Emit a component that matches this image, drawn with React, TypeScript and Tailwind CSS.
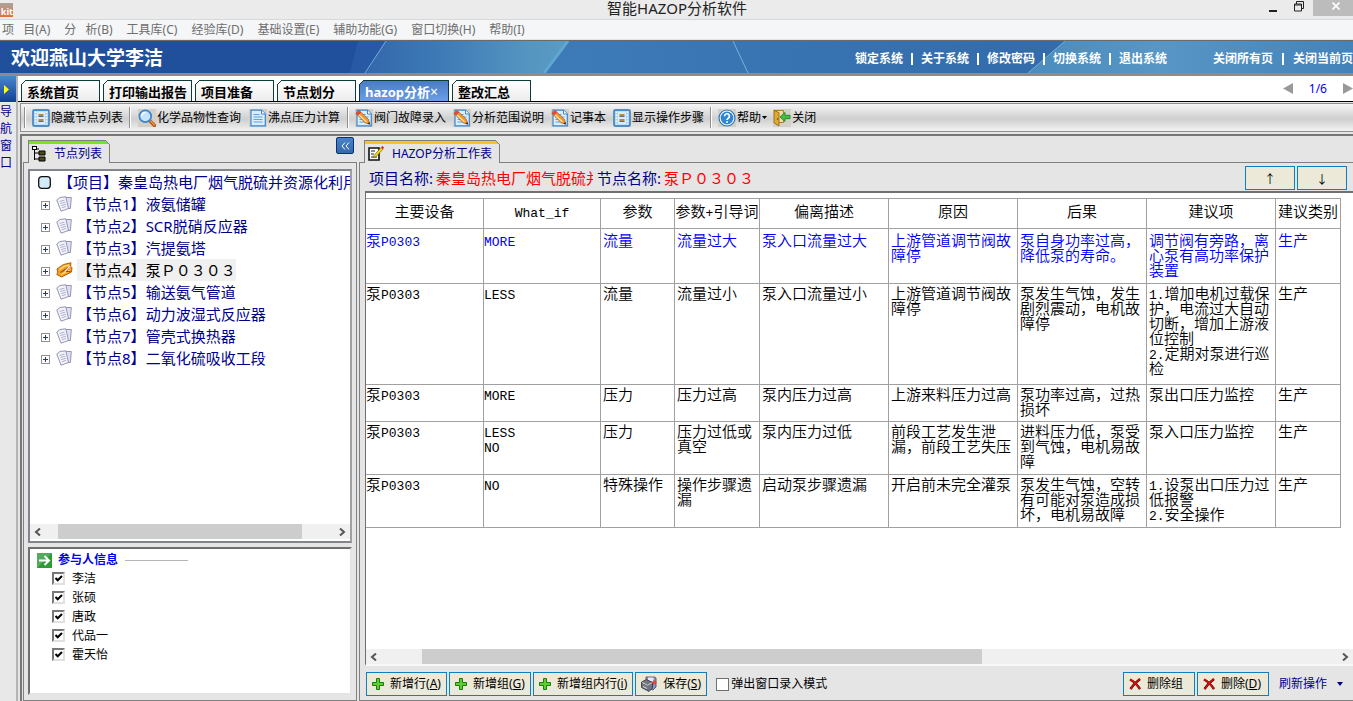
import type { ReactNode } from "react";

const SANS = "font-['Noto_Sans','Noto_Sans_CJK_SC',sans-serif]";

const MENU = [
  "项   目(A)",
  "分   析(B)",
  "工具库(C)",
  "经验库(D)",
  "基础设置(E)",
  "辅助功能(G)",
  "窗口切换(H)",
  "帮助(I)",
];

const SYSTEM_LINKS = ["锁定系统", "关于系统", "修改密码", "切换系统", "退出系统"];

const TABS = [
  { label: "系统首页", width: "w-[79px]" },
  { label: "打印输出报告", width: "w-[89px]" },
  { label: "项目准备", width: "w-[79px]" },
  { label: "节点划分", width: "w-[79px]" },
  { label: "hazop分析", width: "w-[90px]", active: true },
  { label: "整改汇总", width: "w-[79px]" },
];

const NODES = [
  "液氨储罐",
  "SCR脱硝反应器",
  "汽提氨塔",
  "泵Ｐ０３０３",
  "输送氨气管道",
  "动力波湿式反应器",
  "管壳式换热器",
  "二氧化硫吸收工段",
];

const PEOPLE = ["李洁", "张硕", "唐政", "代品一", "霍天怡"];

const COLUMNS = [
  { label: "主要设备", width: "w-[118px]" },
  { label: "What_if", width: "w-[117px]" },
  { label: "参数", width: "w-[74px]" },
  { label: "参数+引导词", width: "w-[85px]" },
  { label: "偏离描述", width: "w-[129px]" },
  { label: "原因", width: "w-[129px]" },
  { label: "后果", width: "w-[129px]" },
  { label: "建议项", width: "w-[129px]" },
  { label: "建议类别", width: "w-[65px]" },
];

const ROWS = [
  {
    height: "h-[55px]",
    cells: ["泵P0303", "MORE", "流量", "流量过大", "泵入口流量过大", "上游管道调节阀故\n障停", "泵自身功率过高，\n降低泵的寿命。", "调节阀有旁路，离\n心泵有高功率保护\n装置", "生产"],
  },
  {
    height: "h-[101px]",
    cells: ["泵P0303", "LESS", "流量", "流量过小", "泵入口流量过小", "上游管道调节阀故\n障停", "泵发生气蚀，发生\n剧烈震动，电机故\n障停", "1.增加电机过载保\n护，电流过大自动\n切断，增加上游液\n位控制\n2.定期对泵进行巡\n检", "生产"],
  },
  {
    height: "h-[37px]",
    cells: ["泵P0303", "MORE", "压力", "压力过高", "泵内压力过高", "上游来料压力过高", "泵功率过高，过热\n损坏", "泵出口压力监控", "生产"],
  },
  {
    height: "h-[53px]",
    cells: ["泵P0303", "LESS\nNO", "压力", "压力过低或\n真空", "泵内压力过低", "前段工艺发生泄\n漏，前段工艺失压", "进料压力低，泵受\n到气蚀，电机易故\n障", "泵入口压力监控", "生产"],
  },
  {
    height: "h-[53px]",
    cells: ["泵P0303", "NO", "特殊操作", "操作步骤遗\n漏", "启动泵步骤遗漏", "开启前未完全灌泵", "泵发生气蚀，空转\n有可能对泵造成损\n坏，电机易故障", "1.设泵出口压力过\n低报警\n2.安全操作", "生产"],
  },
];

// Latin runs are set in a monospaced face, a little smaller than the Chinese text
function GridText({ text }: { text: string }) {
  return (
    <>
      {text.split(/([\x21-\x7e]+)/).map((part, i) =>
        i % 2 ? (
          <span key={i} className="font-['Liberation_Mono',monospace] text-[13px] leading-[0px]">
            {part}
          </span>
        ) : (
          part
        )
      )}
    </>
  );
}

function FilmIcon() {
  return (
    <svg className="size-[18px] shrink-0" viewBox="0 0 18 18">
      <rect width="18" height="18" fill="#d3d0c8" />
      <rect x="1" y="1" width="16" height="16" rx="1.5" fill="#a9d3f5" stroke="#2e78bd" strokeWidth="1.4" />
      <path d="M3.5 2.5v13M14.5 2.5v13" stroke="#fff" strokeWidth="1.6" strokeDasharray="1.6 1.4" />
      <rect x="5" y="2.5" width="8" height="13" fill="#d9ecfb" />
      <path d="M6.5 6h5M6.5 11h5" stroke="#b58a45" strokeWidth="2" />
      <path d="M6.5 7.5h5M6.5 12.5h5" stroke="#5a6d80" />
    </svg>
  );
}

function SearchIcon() {
  return (
    <svg className="size-[18px] shrink-0" viewBox="0 0 18 18">
      <rect width="18" height="18" fill="#d3d0c8" />
      <path d="M11.5 11.5l5 5" stroke="#b4551b" strokeWidth="3.2" strokeLinecap="round" />
      <path d="M12 11.6l4.4 4.4" stroke="#f29a45" strokeWidth="1.2" strokeLinecap="round" />
      <circle cx="7.3" cy="7.3" r="5.9" fill="#c3e4fb" stroke="#3d83c9" strokeWidth="1.7" />
      <path d="M3.6 7.2a3.8 3.8 0 0 1 3.8-3.7" stroke="#fff" strokeWidth="1.5" fill="none" />
    </svg>
  );
}

function PageIcon({ pencil = false }: { pencil?: boolean }) {
  return (
    <svg className="size-[18px] shrink-0" viewBox="0 0 18 18">
      <rect width="18" height="18" fill="#d3d0c8" />
      <path d="M2 1.2h10.5L16.3 5v11.8H2z" fill="#d9edfc" stroke="#3d86cb" strokeWidth="1.2" />
      <path d="M12.5 1.2V5h3.8" fill="#fff" stroke="#3d86cb" />
      <path d="M4.5 5.5h6M4.5 8h9M4.5 10.5h9M4.5 13h9" stroke="#5ea2de" strokeWidth="1.1" />
      {pencil ? (
        <>
          <path d="M.8 4.2l3.4-2.6 9.3 9 1.3 4.7-4.7-1.6z" fill="#f39a2b" stroke="#a8501a" strokeWidth=".7" />
          <path d="M.8 4.2l3.4-2.6 2 2L3 6.4z" fill="#e2493a" />
          <path d="M4 6l7.5 7" stroke="#ffe3a8" strokeWidth="1.2" />
          <path d="M12.6 14.5l2.4.9-.7-2.5z" fill="#222" />
        </>
      ) : null}
    </svg>
  );
}

function HelpIcon() {
  return (
    <svg className="size-[18px] shrink-0" viewBox="0 0 18 18">
      <rect width="18" height="18" fill="#d3d0c8" />
      <circle cx="9" cy="9" r="8" fill="#fff" stroke="#2e72b8" strokeWidth="1.2" />
      <circle cx="9" cy="9" r="6.4" fill="#2f86d8" />
      <path d="M6.6 7.2a2.4 2.4 0 1 1 3.7 2c-.9.6-1.3.9-1.3 1.7" fill="none" stroke="#fff" strokeWidth="1.7" />
      <circle cx="9" cy="12.9" r="1" fill="#fff" />
    </svg>
  );
}

function DoorIcon() {
  return (
    <svg className="size-[18px] shrink-0" viewBox="0 0 18 18">
      <rect width="18" height="18" fill="#d3d0c8" />
      <path d="M1 1.5h9.5v12H6" fill="#e9dcae" stroke="#a8802a" />
      <path d="M1 1.5l5 2V17l-5-3z" fill="#e3a92e" stroke="#8a6316" strokeWidth=".8" />
      <circle cx="4.6" cy="10" r=".8" fill="#5b3f0b" />
      <path d="M7 8l5-4.5v2.8h5v3.4h-5v2.8z" fill="#43c043" stroke="#1b7d1f" strokeWidth=".8" />
    </svg>
  );
}

function SheetsIcon() {
  return (
    <svg className="h-4 w-[17px] shrink-0" viewBox="0 0 17 16">
      <path d="M7 1.5h8.3l-.9 11H8z" fill="#e0e0f2" stroke="#8a8aae" strokeWidth=".9" />
      <path d="M.8 4L4 1.5 9.8.8l2.7 11.7L5 15.2z" fill="#f3f3fb" stroke="#8a8aae" strokeWidth=".9" />
      <path d="M3.5 5.4l5-1.2M4.2 7.5l5-1.3M5 9.7l5-1.5M5.8 11.8l4.2-1.4" stroke="#a9a9c8" strokeWidth=".9" />
    </svg>
  );
}

function OpenNoteIcon() {
  return (
    <svg className="h-4 w-[17px] shrink-0" viewBox="0 0 17 16">
      <path d="M1 7L7.5 2.5 15 .8l-.5 3.7 1.5 1-.5 4.5-10 5L.8 12.5l1-2.5z" fill="#f6a21c" stroke="#b75a08" />
      <path d="M3.5 7.5l5-3.3 4.500-1" fill="none" stroke="#ffe08a" strokeWidth="1.3" />
      <path d="M5 12.5L13.500 8" stroke="#ffe08a" strokeWidth="1.3" />
      <path d="M4.500 10.500l8.500-5.500-2.500 4.500h4" fill="none" stroke="#a84a04" strokeWidth="1.2" />
      <path d="M9 9.500L14 4" stroke="#e8e8f0" strokeWidth="1.3" />
    </svg>
  );
}

function PlusIcon() {
  return (
    <svg className="size-3 shrink-0" viewBox="0 0 12 12">
      <path d="M4.5.5h3v4h4v3h-4v4h-3v-4h-4v-3h4z" fill="#5fce2f" stroke="#1a7a12" />
    </svg>
  );
}

function CrossIcon() {
  return (
    <svg className="size-3 shrink-0" viewBox="0 0 12 12">
      <path d="M1 1.5c4 2 7 5 10 9.5M11 1C7 4 4 7 1.5 11" fill="none" stroke="#400" strokeWidth="2.4" />
      <path d="M1 1.5c4 2 7 5 10 9.5M11 1C7 4 4 7 1.5 11" fill="none" stroke="#d8100c" strokeWidth="1.5" />
    </svg>
  );
}

function SaveIcon() {
  return (
    <svg className="size-4 shrink-0" viewBox="0 0 16 16">
      <path d="M5 1h8.5l1.5 1v9l-3 3-7-3z" fill="#8d94d0" stroke="#40435f" strokeWidth=".8" />
      <path d="M7 1.5h5.5v4H7z" fill="#e8eaf7" />
      <path d="M.5 6l5-2.5 6 3V12L8 15.5l-7.5-4z" fill="#71757d" stroke="#2b2d33" strokeWidth=".8" />
      <path d="M1 6.2l5.5 3L11 6.7" stroke="#c9ccd3" fill="none" />
      <path d="M2 10.5l4 2" stroke="#ddd" />
      <path d="M10.5 6.5H15M12 8.5l3-2-2.5-2" stroke="#e0452e" strokeWidth="1.3" fill="none" />
    </svg>
  );
}

function Chevron({ right = false }: { right?: boolean }) {
  return (
    <svg className="h-2 w-[7px]" viewBox="0 0 7 8">
      <path d={right ? "M1 .5L5 4 1 7.5" : "M6 .5L2 4l4 3.5"} fill="none" stroke="#555" strokeWidth="2" />
    </svg>
  );
}

function BannerArt() {
  return (
    <svg className="absolute inset-0 size-full" viewBox="0 0 1353 33" preserveAspectRatio="none">
      <defs>
        <linearGradient id="mid">
          <stop offset="0" stopColor="#3468ac" />
          <stop offset=".35" stopColor="#3d79b6" />
          <stop offset=".8" stopColor="#5495c1" />
          <stop offset="1" stopColor="#5b9cc5" />
        </linearGradient>
        <linearGradient id="far">
          <stop offset="0" stopColor="#3d7bb8" />
          <stop offset="1" stopColor="#336bab" />
        </linearGradient>
        <linearGradient id="end">
          <stop offset="0" stopColor="#4a8cbd" />
          <stop offset=".4" stopColor="#5796c5" />
          <stop offset="1" stopColor="#4483ba" />
        </linearGradient>
      </defs>
      <path d="M0 0h1353v33H0z" fill="#20509b" />
      <path d="M358 0h30L366 33h-16z" fill="#2859a4" />
      <path d="M386 0h183l-24 33H366z" fill="url(#mid)" />
      <path d="M569 0h496l-37 33H545z" fill="url(#far)" />
      <path d="M1065 0h288v33h-325z" fill="url(#end)" />
      <path d="M386 0l-21 33M1065 0l-37 33M733 0l15 33" stroke="#79b0d6" strokeWidth="1" />
      <path d="M568 0l-24 33" stroke="#5fa8d0" strokeWidth="3" />
    </svg>
  );
}

function Banner() {
  return (
    <header className="relative h-9 shrink-0 border-t border-b-3 border-t-[#6b6b6b] border-b-[#8c8c8c] text-white">
      <BannerArt />
      <div className="relative flex h-full items-center justify-between overflow-hidden pt-0.5">
        <h1 className="pl-[11px] text-[19px] leading-7 font-bold">欢迎燕山大学李洁</h1>
        <nav className="flex shrink-0 items-center pt-px text-xs font-bold" aria-label="系统">
          {SYSTEM_LINKS.map((label, i) => (
            <span key={label} className="flex items-center">
              {i ? <span className="mx-2 h-3 w-0.5 bg-white" /> : null}
              <a href="#">{label}</a>
            </span>
          ))}
          <a href="#" className="ml-[46px]">关闭所有页</a>
          <span className="mx-[9px] h-3 w-0.5 bg-white" />
          <a href="#">关闭当前页</a>
        </nav>
      </div>
    </header>
  );
}

function TabBar() {
  return (
    <div className="flex h-[26px] shrink-0 items-end border-b border-black bg-white pl-[3px]">
      <div className="flex items-end gap-[3px]" role="tablist">
        {TABS.map((tab) => (
          <button
            key={tab.label}
            role="tab"
            aria-selected={!!tab.active}
            className={`relative h-[21px] border border-b-0 border-[#0c3b3b] pl-[5px] text-left text-[13px] leading-[22px] font-bold whitespace-nowrap ${tab.width} ${
              tab.active
                ? "bg-linear-to-b from-[#4a7cc4] to-[#6a9ee6] text-white"
                : "bg-linear-to-b from-white to-[#ececec] text-black"
            }`}
          >
            {tab.label}
            {tab.active ? <span className="text-sm leading-none font-normal">×</span> : null}
            <svg className="absolute -top-px -left-px size-[5px]" viewBox="0 0 5 5">
              <path d="M0 0h5L0 5z" fill="#fff" />
              <path d="M0 5l5-5" stroke="#0c3b3b" />
            </svg>
          </button>
        ))}
      </div>
      <div className="ml-auto flex h-full items-center gap-4 text-xs text-[#0000f0]">
        <button aria-label="上一页" className="text-[#999]">
          <svg className="h-[11px] w-[10px]" viewBox="0 0 10 11"><path d="M10 0v11L0 5.5z" fill="currentColor" /></svg>
        </button>
        <span>1/6</span>
        <button aria-label="下一页" className="text-[#999]">
          <svg className="h-[11px] w-[10px]" viewBox="0 0 10 11"><path d="M0 0v11l10-5.5z" fill="currentColor" /></svg>
        </button>
      </div>
    </div>
  );
}

function ToolButton({ icon, children }: { icon: ReactNode; children: ReactNode }) {
  return (
    <button className="flex items-center gap-px text-xs whitespace-nowrap">
      {icon}
      {children}
    </button>
  );
}

function Divider() {
  return <span className="h-[21px] w-0.5 border-l border-[#8f8f8f] bg-white" />;
}

function Toolbar() {
  return (
    <div className="mt-px ml-0.5 flex h-[29px] shrink-0 items-center border-y border-l border-[#909090] bg-linear-to-b from-[#f6f6f6] from-0% via-[#cfcfcf] via-55% to-[#f2f2f2] pl-[3px]">
      <Divider />
      <div className="flex px-1.5">
        <ToolButton icon={<FilmIcon />}>隐藏节点列表</ToolButton>
      </div>
      <Divider />
      <div className="flex gap-2 px-[7px]">
        <ToolButton icon={<SearchIcon />}>化学品物性查询</ToolButton>
        <ToolButton icon={<PageIcon />}>沸点压力计算</ToolButton>
      </div>
      <Divider />
      <div className="flex gap-[7px] px-1.5">
        <ToolButton icon={<PageIcon pencil />}>阀门故障录入</ToolButton>
        <ToolButton icon={<PageIcon pencil />}>分析范围说明</ToolButton>
        <ToolButton icon={<PageIcon pencil />}>记事本</ToolButton>
        <ToolButton icon={<FilmIcon />}>显示操作步骤</ToolButton>
      </div>
      <Divider />
      <div className="flex gap-1.5 px-1.5">
        <ToolButton icon={<HelpIcon />}>
          帮助
          <svg className="h-[3px] w-[5px]" viewBox="0 0 5 3"><path d="M0 0h5L2.5 3z" /></svg>
        </ToolButton>
        <ToolButton icon={<DoorIcon />}>关闭</ToolButton>
      </div>
    </div>
  );
}

// Tab on top of a panel: coloured top edge, cut right corner
function PanelTab({ accent, icon, children }: { accent: string; icon: ReactNode; children: ReactNode }) {
  return (
    <div className="relative -mb-px ml-[5px] flex h-[23px] items-center border-x border-t border-[#808080] bg-[#e5e5e5] pr-[7px] pl-[3px] text-xs text-[#00008b]">
      <span className={`absolute inset-x-0 top-0 h-[3px] ${accent}`} />
      {icon}
      <span className="pt-1 pl-2 whitespace-nowrap">{children}</span>
      <svg className="absolute -top-px -right-px size-[5px]" viewBox="0 0 5 5">
        <path d="M0 0h5v5z" fill="#e5e5e5" />
        <path d="M0 0l5 5" stroke="#808080" />
      </svg>
    </div>
  );
}

function NodePanel() {
  return (
    <section className="flex w-[334px] shrink-0 flex-col">
      <div className="flex h-[26px] shrink-0 items-end justify-between">
        <PanelTab
          accent="bg-[#6fe81c]"
          icon={
            <svg className="mt-1 h-4 w-[14px]" viewBox="0 0 14 16">
              <path d="M2.5 4v10M2.5 7H8M2.5 13H8M4 3h3" stroke="#000" fill="none" />
              <rect x=".5" y=".5" width="4" height="3" fill="#fff" stroke="#000" />
              <path d="M7 5h6v4H7zM7 11h6v4H7z" fill="#4a4a12" stroke="#000" />
            </svg>
          }
        >
          节点列表
        </PanelTab>
        <button aria-label="收起" className="mr-[3px] mb-2 flex h-[17px] w-[18px] items-center justify-center rounded-xs border border-[#0c2f7c] bg-linear-to-b from-[#4a83c8] to-[#3568ad]">
          <svg className="h-2 w-[9px]" viewBox="0 0 9 8"><path d="M4 .5L1 4l3 3.5M8 .5L5 4l3 3.5" stroke="#fff" fill="none" /></svg>
        </button>
      </div>
      <div className="flex min-h-0 grow flex-col border border-[#808080] p-1 pt-1.5 pb-[5px]">
        <div className="flex min-h-0 grow flex-col overflow-hidden border-2 border-[#82868c] border-r-[#a0a0a0] bg-white">
          <ul className="grow overflow-hidden text-[15px] leading-[22px] whitespace-nowrap text-[#00008b]">
            <li className="flex items-center">
              <span className="mr-2 h-2 w-px bg-[#a0a0a0]" />
              <svg className="size-[13px] shrink-0" viewBox="0 0 13 13">
                <rect x=".7" y=".7" width="11.6" height="11.6" rx="3" fill="#d4ebf9" stroke="#111" strokeWidth="1.3" />
              </svg>
              <span className="pl-[7px]">【项目】秦皇岛热电厂烟气脱硫并资源化利用</span>
            </li>
            {NODES.map((name, i) => (
              <li key={name} className="flex items-center pl-[11px]">
                <button aria-label="展开" className="mt-0.5 size-[9px] shrink-0">
                  <svg className="size-[9px]" viewBox="0 0 9 9">
                    <rect x=".5" y=".5" width="8" height="8" fill="#fff" stroke="#919191" />
                    <path d="M2 4.5h5M4.5 2v5" stroke="#26397a" />
                  </svg>
                </button>
                <span className="pr-1 pl-1.5">{i === 3 ? <OpenNoteIcon /> : <SheetsIcon />}</span>
                <span className={i === 3 ? "bg-[#f0f0f0] text-black" : ""}>
                  【节点{i + 1}】{name}
                </span>
              </li>
            ))}
          </ul>
          <div className="mb-0.5 flex h-[15px] shrink-0 items-center bg-[#f0f0f0] px-1">
            <Chevron />
            <span className="ml-[17px] h-full w-[244px] bg-[#cdcdcd]" />
            <span className="ml-auto"><Chevron right /></span>
          </div>
        </div>
        <fieldset className="mt-1 h-[148px] shrink-0 border-2 border-[#e4e4e4] border-t-[#707070] border-l-[#707070] bg-white px-[7px] text-xs">
          <div className="flex h-5 items-center pt-0.5 font-bold text-[#0000f0]">
            <svg className="size-[15px]" viewBox="0 0 15 15">
              <rect width="15" height="15" fill="#2e9a38" />
              <path d="M0 0h15L0 15z" fill="#55aa5c" />
              <path d="M2 7.5h9M7.5 3L12 7.5 7.5 12" stroke="#fff" strokeWidth="2" fill="none" />
            </svg>
            <span className="pl-1.5">参与人信息</span>
            <span className="ml-[7px] h-px w-[63px] bg-[#b5b5b5]" />
          </div>
          {PEOPLE.map((name) => (
            <label key={name} className="flex h-[19px] items-center gap-[7px] pl-[15px]">
              <span className="relative size-[13px]">
                <input
                  type="checkbox"
                  defaultChecked
                  className="peer block size-[13px] appearance-none border-2 border-[#e0e0e0] border-t-[#777] border-l-[#777] bg-white"
                />
                <svg className="pointer-events-none invisible absolute inset-0 size-[13px] peer-checked:visible" viewBox="0 0 13 13">
                  <path d="M3.5 6l2.2 2.3L10 4" stroke="#000" strokeWidth="2" fill="none" />
                </svg>
              </span>
              {name}
            </label>
          ))}
        </fieldset>
      </div>
    </section>
  );
}

type ActionButtonProps = {
  icon: ReactNode;
  label: string;
  hotkey?: string;
  wide?: boolean;
};

function ActionButton({ icon, label, hotkey, wide = false }: ActionButtonProps) {
  return (
    <button
      className={`flex h-6 items-center gap-1.5 border border-[#0f80bf] bg-[#ece9d8] px-[5px] whitespace-nowrap ${wide ? "w-[72px]" : ""}`}
    >
      {icon}
      <span>
        {label}
        {hotkey ? <>(<u>{hotkey}</u>)</> : null}
      </span>
    </button>
  );
}

function Worksheet() {
  return (
    <table className="mt-[5px] w-[975px] table-fixed border-separate border-spacing-0 border-t border-[#a0a0a0] font-['Noto_Sans_CJK_SC',sans-serif] text-[15px] leading-[15px] font-[350]">
      <colgroup>
        {COLUMNS.map((col) => (
          <col key={col.label} className={col.width} />
        ))}
      </colgroup>
      <thead>
        <tr className="h-[30px]">
          {COLUMNS.map((col) => (
            <th key={col.label} className="border-r border-b border-[#a0a0a0] p-0 pb-1.5 text-center font-[350] whitespace-nowrap">
              <GridText text={col.label} />
            </th>
          ))}
        </tr>
      </thead>
      <tbody>
        {ROWS.map((row, r) => (
          <tr key={r} className={`${row.height} ${r === 0 ? "text-[#0000f0]" : "text-black"}`}>
            {row.cells.map((cell, c) => (
              <td
                key={c}
                className={`border-r border-b border-[#a0a0a0] p-0 align-top whitespace-pre ${r ? "pt-px" : "pt-[3px]"} ${c < 2 ? "" : "pl-0.5"}`}
              >
                <GridText text={cell} />
              </td>
            ))}
          </tr>
        ))}
      </tbody>
    </table>
  );
}

function WorkPanel() {
  return (
    <section className="ml-0.5 flex min-w-0 grow flex-col">
      <div className="flex h-[26px] shrink-0 items-end">
        <PanelTab
          accent="bg-[#fbc02d]"
          icon={
            <svg className="mt-0.5 h-[17px] w-4" viewBox="0 0 16 17">
              <path d="M1 3h10v12H1z" fill="#fff" stroke="#111" strokeWidth="1.6" />
              <path d="M3 6h4M3 9h3M3 12h6" stroke="#222" strokeWidth="1.2" />
              <path d="M6 10.5l7-8 2 1.7-7 7.5-2.5.8z" fill="#f5dc1b" stroke="#5a5200" strokeWidth=".6" />
              <path d="M13 2.5L14.5 1 16 2.5l-1 1.7z" fill="#e02020" />
            </svg>
          }
        >
          HAZOP分析工作表
        </PanelTab>
      </div>
      <div className="flex min-h-0 grow flex-col border border-r-0 border-[#808080] pl-[5px]">
        <div className="flex h-7 shrink-0 items-center pt-0.5 pl-1 text-[15px] text-[#00008b]">
          <span className="shrink-0">项目名称:</span>
          <span className="ml-[3px] w-[157px] shrink-0 overflow-hidden whitespace-nowrap text-[#f00]">
            秦皇岛热电厂烟气脱硫并
          </span>
          <span className="ml-1 shrink-0">节点名称:</span>
          <span className="ml-[3px] whitespace-nowrap text-[#f00]">泵Ｐ０３０３</span>
          <div className="ml-auto flex gap-0.5 pr-1.5 text-black">
            <button aria-label="上移" className="h-6 w-[50px] border border-[#0f80bf] bg-[#ece9d8] pt-1 text-xs">↑</button>
            <button aria-label="下移" className="h-6 w-[50px] border border-[#0f80bf] bg-[#ece9d8] pt-1 text-xs">↓</button>
          </div>
        </div>
        <div className="flex min-h-0 grow flex-col overflow-hidden border-y-2 border-l border-[#707070] border-b-[#f8f8f8] bg-white">
          <div className="min-h-0 grow overflow-hidden">
            <Worksheet />
          </div>
          <div className="flex h-[15px] shrink-0 items-center bg-[#f0f0f0] px-1">
            <Chevron />
            <div className="mx-[45px] h-full min-w-0 grow">
              <div className="h-full w-[64%] bg-[#cdcdcd]" />
            </div>
            <Chevron right />
          </div>
        </div>
        <div className="flex h-[34px] shrink-0 items-center gap-0.5 pt-0.5 pl-px text-xs">
          <ActionButton icon={<PlusIcon />} label="新增行" hotkey="A" />
          <ActionButton icon={<PlusIcon />} label="新增组" hotkey="G" />
          <ActionButton icon={<PlusIcon />} label="新增组内行" hotkey="i" />
          <ActionButton icon={<SaveIcon />} label="保存" hotkey="S" wide />
          <label className="ml-[7px] flex items-center gap-0.5 whitespace-nowrap">
            <input type="checkbox" className="size-[13px] appearance-none border border-[#707070] bg-white" />
            弹出窗口录入模式
          </label>
          <div className="ml-auto flex items-center gap-0.5 pr-2.5">
            <ActionButton icon={<CrossIcon />} label="删除组" wide />
            <ActionButton icon={<CrossIcon />} label="删除" hotkey="D" wide />
            <button className="flex items-center gap-2.5 pl-2 whitespace-nowrap text-[#00008b]">
              刷新操作
              <svg className="h-[4px] w-[6px]" viewBox="0 0 6 4"><path d="M0 0h6L3 4z" fill="currentColor" /></svg>
            </button>
          </div>
        </div>
      </div>
    </section>
  );
}

export default function App() {
  return (
    <div className={`flex h-screen flex-col overflow-hidden bg-[#e5e5e5] text-black ${SANS}`}>
      <div className="relative flex h-5 shrink-0 items-center border-b border-[#d8d8d8] bg-[#ebebeb]">
        <span className="flex h-[14px] w-[13px] items-end justify-end overflow-hidden bg-linear-to-b from-[#a9a39e] to-[#e0703a] text-[9px] leading-[10px] font-bold text-white">kit</span>
        <span className="grow pr-3 pb-1 text-center text-[15px] leading-4 text-[#222]">智能HAZOP分析软件</span>
        <div className="absolute top-0 right-0 flex h-4 items-center">
          <button aria-label="最小化" className="px-[17px]">
            <svg className="h-3 w-2" viewBox="0 0 8 12"><path d="M0 9h8" stroke="#222" strokeWidth="2" /></svg>
          </button>
          <button aria-label="还原" className="pr-[9px] pb-1">
            <svg className="h-[11px] w-[10px]" viewBox="0 0 10 11"><path d="M.5 3h7v7h-7zM2.5 3V.5h7v7H8M.5 4h7" fill="none" stroke="#222" /></svg>
          </button>
          <button aria-label="关闭窗口" className="flex h-4 w-10 items-center justify-center bg-[#bcbcbc] pb-1 pl-1.5">
            <svg className="size-2" viewBox="0 0 8 8"><path d="M.5.5l7 7M7.5.5l-7 7" stroke="#fff" strokeWidth="1.6" /></svg>
          </button>
        </div>
      </div>
      <nav className="flex h-5 shrink-0 items-center gap-3.5 border-b border-[#e3e3e3] bg-[#f5f6f7] pl-0.5 text-xs whitespace-pre text-[#6e6e6e]" aria-label="菜单">
        {MENU.map((label) => (
          <button key={label}>{label}</button>
        ))}
      </nav>
      <Banner />
      <div className="flex min-h-0 grow">
        <aside className="flex w-[18px] shrink-0 flex-col border-r-2 border-[#b5b5b5] bg-[#e8e8e8]">
          <button aria-label="展开导航窗口" className="flex h-[26px] shrink-0 items-center bg-linear-to-b from-[#4a86cf] to-[#123f97] pl-1">
            <svg className="h-[9px] w-[5px]" viewBox="0 0 5 9"><path d="M0 0v9l5-4.5z" fill="#ff0" /></svg>
          </button>
          <span className="w-3 pt-px text-xs leading-[17px] text-[#00008b]">导航窗口</span>
        </aside>
        <div className="flex min-w-0 grow flex-col">
          <TabBar />
          <Toolbar />
          <main className="mt-0.5 ml-0.5 flex min-h-0 grow border-t-2 border-l-2 border-[#777] pl-px">
            <NodePanel />
            <WorkPanel />
          </main>
        </div>
      </div>
    </div>
  );
}
